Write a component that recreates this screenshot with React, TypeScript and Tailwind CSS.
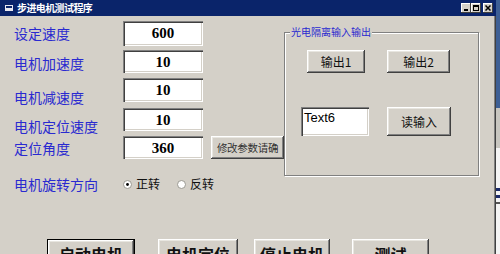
import React from "react";

const btn =
  "bg-[#d4d0c8] shadow-[inset_-1px_-1px_0_#404040,inset_1px_1px_0_#ffffff,inset_-2px_-2px_0_#808080,inset_2px_2px_0_#e8e6e0] flex items-center justify-center text-[#111] font-['Noto_Sans_CJK_SC',sans-serif]";
const field =
  "bg-white shadow-[inset_1px_1px_0_#808080,inset_2px_2px_0_#404040,inset_-1px_-1px_0_#ffffff,inset_-2px_-2px_0_#d4d0c8]";
const label =
  "pl-[14px] w-[123px] shrink-0 text-[14px] leading-[14px] text-[#2a2ad0] font-['Noto_Sans_CJK_SC',sans-serif] whitespace-nowrap";
const num =
  "w-[80px] flex justify-center pt-[4px] text-[15px] leading-[16px] font-bold text-black font-['Liberation_Serif',serif]";

function Radio({ checked }: { checked: boolean }) {
  return (
    <svg width="9" height="9" viewBox="0 0 9 9" className="shrink-0">
      <circle cx="4.5" cy="4.5" r="4" fill="#fff" stroke="#9a9890" strokeWidth="1" />
      {checked && <circle cx="4.5" cy="4.5" r="1.4" fill="#000" />}
    </svg>
  );
}

export default function App() {
  return (
    <div className="w-[500px] h-[254px] overflow-hidden flex bg-[#d4d0c8]">
      <div className="w-[496px] h-[254px] shrink-0 flex flex-col bg-[#d4d0c8] shadow-[inset_-1px_0_0_#404040,inset_-2px_0_0_#808080]">
        {/* Title bar */}
        <div className="h-[16px] shrink-0 bg-[#0a246a] flex items-center pr-[2px]">
          <svg width="9" height="7" viewBox="0 0 9 7" className="ml-[5px] mr-[3px]">
            <rect x="0" y="0" width="8" height="6" fill="#e8e8f0" />
            <rect x="1" y="1" width="6" height="2" fill="#0a246a" />
          </svg>
          <span className="text-white font-bold text-[10px] leading-[12px] tracking-[-0.6px] font-['Noto_Sans_CJK_SC',sans-serif]">
            步进电机测试程序
          </span>
          <div className="ml-auto flex items-center">
            <div className="w-[10px] h-[10px] bg-[#d4d0c8] shadow-[inset_-1px_-1px_0_#404040,inset_1px_1px_0_#ffffff] flex items-end justify-center pb-[2px]">
              <div className="w-[4px] h-[2px] bg-black" />
            </div>
            <div className="w-[10px] h-[10px] bg-[#d4d0c8] shadow-[inset_-1px_-1px_0_#404040,inset_1px_1px_0_#ffffff] flex items-center justify-center">
              <div className="w-[6px] h-[6px] border border-black border-t-2" />
            </div>
            <div className="ml-[2px] mr-[1px] w-[10px] h-[10px] bg-[#d4d0c8] shadow-[inset_-1px_-1px_0_#404040,inset_1px_1px_0_#ffffff] flex items-center justify-center">
              <svg width="6" height="6" viewBox="0 0 6 6">
                <path d="M0.5 0.5 L5.5 5.5 M5.5 0.5 L0.5 5.5" stroke="#000" strokeWidth="1.5" />
              </svg>
            </div>
          </div>
        </div>

        {/* Body */}
        <div className="flex flex-col">
          <div className="flex">
            {/* Left column */}
            <div className="w-[284px] shrink-0 flex flex-col">
              <div className="mt-[5px] h-[25px] flex items-start">
                <div className={`${label} mt-[5px]`}>设定速度</div>
                <div className={`${field} ${num} h-[25px]`}>600</div>
              </div>
              <div className="mt-[4px] h-[23px] flex items-start">
                <div className={`${label} mt-[6px]`}>电机加速度</div>
                <div className={`${field} ${num} h-[23px]`}>10</div>
              </div>
              <div className="mt-[5px] h-[24px] flex items-start">
                <div className={`${label} mt-[12px]`}>电机减速度</div>
                <div className={`${field} ${num} h-[24px]`}>10</div>
              </div>
              <div className="mt-[6px] h-[23px] flex items-start">
                <div className={`${label} mt-[11px]`}>电机定位速度</div>
                <div className={`${field} ${num} h-[23px]`}>10</div>
              </div>
              <div className="mt-[5px] h-[23px] flex items-start">
                <div className={`${label} mt-[5px]`}>定位角度</div>
                <div className={`${field} ${num} h-[23px]`}>360</div>
                <div className={`${btn} ml-[8px] w-[73px] h-[23px] text-[10.5px] leading-[12px] tracking-[-0.3px] text-[#333]`}>
                  修改参数请确
                </div>
              </div>
              <div className="mt-[18px] h-[14px] flex items-center">
                <div className={label}>电机旋转方向</div>
                <div className="flex items-center gap-[4px] text-[12px] leading-[14px] text-[#111] font-['Noto_Sans_CJK_SC',sans-serif]">
                  <Radio checked />
                  <span>正转</span>
                </div>
                <div className="ml-[17px] flex items-center gap-[4px] text-[12px] leading-[14px] text-[#111] font-['Noto_Sans_CJK_SC',sans-serif]">
                  <Radio checked={false} />
                  <span>反转</span>
                </div>
              </div>
            </div>

            {/* Group box */}
            <div className="relative mt-[16px] w-[195px] h-[144px] shrink-0 border border-[#808080] shadow-[inset_1px_1px_0_#ffffff,1px_1px_0_#ffffff] flex flex-col">
              <span className="absolute left-[5px] top-[-7px] bg-[#d4d0c8] px-[1px] text-[10px] leading-[12px] text-[#2a2ad0] font-['Noto_Sans_CJK_SC',sans-serif] whitespace-nowrap">
                光电隔离输入输出
              </span>
              <div className="mt-[17px] flex">
                <div className={`${btn} ml-[22px] w-[58px] h-[23px] text-[12px] leading-[14px]`}>输出1</div>
                <div className={`${btn} ml-[22px] w-[63px] h-[23px] text-[12px] leading-[14px]`}>输出2</div>
              </div>
              <div className="mt-[34px] flex">
                <div className={`${field} ml-[16px] w-[68px] h-[29px] pl-[3px] pt-[3px] text-[13px] leading-[15px] text-black font-['Liberation_Sans',sans-serif]`}>
                  Text6
                </div>
                <div className={`${btn} ml-[18px] w-[64px] h-[29px] text-[12px] leading-[14px]`}>读输入</div>
              </div>
            </div>
          </div>

          {/* Bottom buttons */}
          <div className="mt-[48px] flex">
            <div className={`${btn} ml-[47px] w-[88px] h-[30px] border border-black items-start pt-[6px] text-[16px] leading-[16px] font-bold`}>
              启动电机
            </div>
            <div className={`${btn} ml-[23px] w-[80px] h-[30px] items-start pt-[7px] text-[16px] leading-[16px] font-bold`}>
              电机定位
            </div>
            <div className={`${btn} ml-[16px] w-[76px] h-[30px] items-start pt-[7px] text-[16px] leading-[16px] font-bold`}>
              停止电机
            </div>
            <div className={`${btn} ml-[22px] w-[77px] h-[30px] items-start pt-[7px] text-[16px] leading-[16px] font-bold`}>
              测试
            </div>
          </div>
        </div>
      </div>

      {/* Background behind window */}
      <div className="w-[4px] shrink-0 flex flex-col">
        <div className="h-[108px] bg-[#3d5f95]" />
        <div className="h-[40px] bg-[#c8c6c0]" />
        <div className="h-[38px] bg-[#f4f4f4]" />
        <div className="h-[22px] bg-[#f4f4f4] flex flex-col gap-[4px] pt-[2px]">
          <div className="h-[3px] bg-[#1a2a6a]" />
          <div className="h-[3px] bg-[#1a2a6a]" />
          <div className="h-[2px] bg-[#555]" />
        </div>
        <div className="flex-1 bg-[#f4f4f4]" />
      </div>
    </div>
  );
}
